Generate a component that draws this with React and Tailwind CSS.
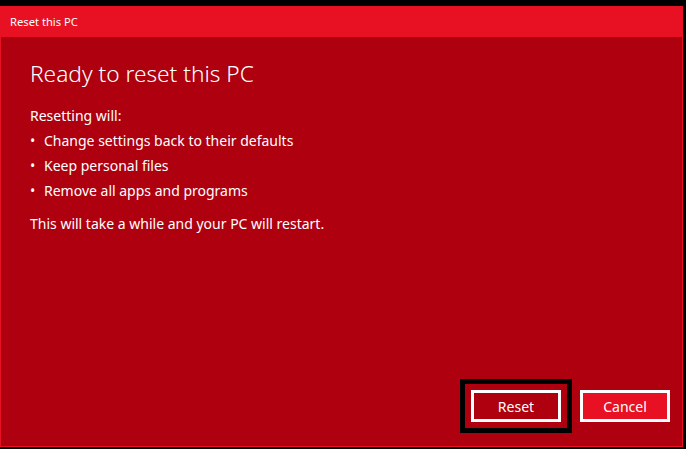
import React from 'react';

const items = [
  'Change settings back to their defaults',
  'Keep personal files',
  'Remove all apps and programs',
];

const App = () => {
  return (
    <div className="w-[686px] h-[449px] bg-black pt-[6px] overflow-hidden" style={{ fontFamily: '"Noto Sans", "Open Sans", sans-serif' }}>
      <div className="w-[683px] h-[441px] border border-[#e81123] bg-[#ae000f] flex flex-col">
        <div className="h-[30px] bg-[#e81123] text-white text-[11.2px] pl-[9px] flex items-center">
          Reset this PC
        </div>
        <div className="flex-1 flex flex-col pl-[29px] pr-[12px] text-white">
          <h1 className="text-[22.7px] font-light mt-[22px] leading-[30px]">Ready to reset this PC</h1>
          <p className="text-[14px] mt-[15px] leading-[24px]">Resetting will:</p>
          <ul className="text-[14px] leading-[25px]">
            {items.map((item) => (
              <li key={item} className="flex">
                <span className="w-[14px]">•</span>
                <span>{item}</span>
              </li>
            ))}
          </ul>
          <p className="text-[14px] mt-[9px] leading-[24px]">This will take a while and your PC will restart.</p>
          <div className="mt-auto mb-[13px] flex justify-end items-center gap-[8px]">
            <div className="border-[5px] border-black p-[6px]">
              <button className="w-[90px] h-[32px] border-[3px] border-white bg-[#ae000f] text-white text-[14px]">
                Reset
              </button>
            </div>
            <button className="w-[90px] h-[32px] border-[3px] border-white bg-[#e81123] text-white text-[14px]">
              Cancel
            </button>
          </div>
        </div>
      </div>
    </div>
  );
};

export default App;
